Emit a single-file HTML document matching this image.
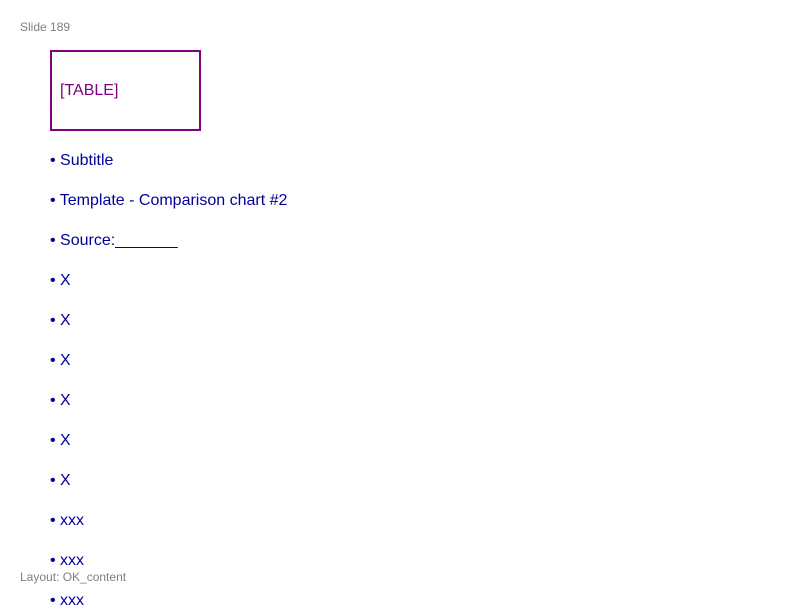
<!DOCTYPE html>
<html><head><style>
html,body{margin:0;padding:0;width:800px;height:600px;overflow:hidden;background:#fff;font-family:"Liberation Sans",Arial,sans-serif;}
.s{position:absolute;left:20px;top:20px;font-size:12px;color:#808080;line-height:14px;}
.l{position:absolute;left:20px;top:570px;font-size:12px;color:#808080;line-height:14px;}
.box{position:absolute;left:50px;top:50px;width:147px;height:77px;border:2px solid #800080;}
.box span{position:absolute;left:8px;top:30px;font-size:16px;color:#800080;line-height:18px;}
.b{position:absolute;left:50px;font-size:16px;color:#000099;line-height:20px;white-space:nowrap;}
</style></head><body>
<div class="s">Slide 189</div>
<div class="box"><span>[TABLE]</span></div>
<div class="b" style="top:151px">• Subtitle</div>
<div class="b" style="top:191px">• Template - Comparison chart #2</div>
<div class="b" style="top:231px">• Source:_______</div>
<div class="b" style="top:271px">• X</div>
<div class="b" style="top:311px">• X</div>
<div class="b" style="top:351px">• X</div>
<div class="b" style="top:391px">• X</div>
<div class="b" style="top:431px">• X</div>
<div class="b" style="top:471px">• X</div>
<div class="b" style="top:511px">• xxx</div>
<div class="b" style="top:551px">• xxx</div>
<div class="b" style="top:591px">• xxx</div>
<div class="l">Layout: OK_content</div>
</body></html>
